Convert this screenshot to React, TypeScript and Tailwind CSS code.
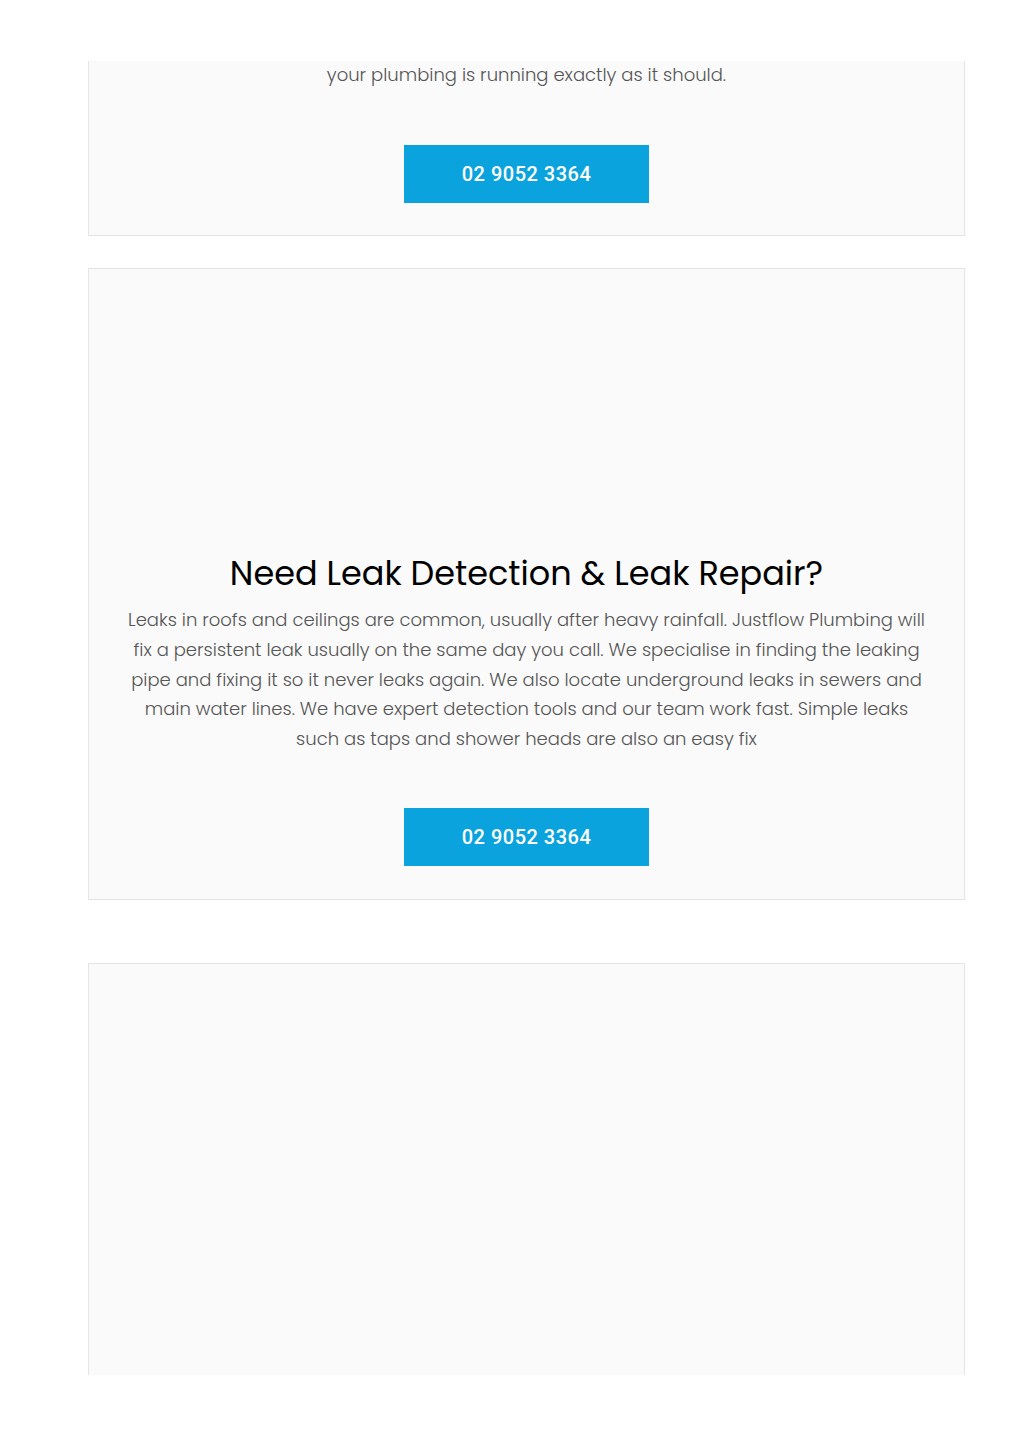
import React from "react";

const body = "font-['Poppins','Open_Sans',sans-serif]";

function CallButton() {
  return (
    <div className="flex justify-center">
      <div className="w-[245px] h-[58px] bg-[#0ba3dd] flex items-center justify-center">
        <span className="font-['Roboto',sans-serif] font-medium text-[20px] tracking-[0.5px] text-white">
          02 9052 3364
        </span>
      </div>
    </div>
  );
}

export default function App() {
  return (
    <div className="h-[1449px] bg-white">
      <div className="mt-[61px] h-[1314px] overflow-hidden">
        <div className="mx-[88px] w-[877px] -mt-[2px] border border-[#e4e4e4] bg-[#fafafa] pb-[32px]">
          <p className={`${body} font-light text-[18px] leading-[30px] text-[#555] text-center`}>
            your plumbing is running exactly as it should.
          </p>
          <div className="mt-[55px]">
            <CallButton />
          </div>
        </div>

        <div className="mx-[88px] w-[877px] mt-[32px] border border-[#e4e4e4] bg-[#fafafa] pb-[33px]">
          <div className="h-[283px]" />
          <h2 className={`${body} font-normal text-[33.5px] leading-[44px] text-black text-center`}>
            Need Leak Detection &amp; Leak Repair?
          </h2>
          <p className={`${body} mt-[9px] font-light text-[18px] leading-[29.8px] text-[#555] text-center whitespace-nowrap`}>
            Leaks in roofs and ceilings are common, usually after heavy rainfall. Justflow Plumbing will
            <br />
            fix a persistent leak usually on the same day you call. We specialise in finding the leaking
            <br />
            pipe and fixing it so it never leaks again. We also locate underground leaks in sewers and
            <br />
            main water lines. We have expert detection tools and our team work fast. Simple leaks
            <br />
            such as taps and shower heads are also an easy fix
          </p>
          <div className="mt-[54px]">
            <CallButton />
          </div>
        </div>

        <div className="mx-[88px] w-[877px] mt-[63px] h-[600px] border border-[#e4e4e4] bg-[#fafafa]" />
      </div>
    </div>
  );
}
